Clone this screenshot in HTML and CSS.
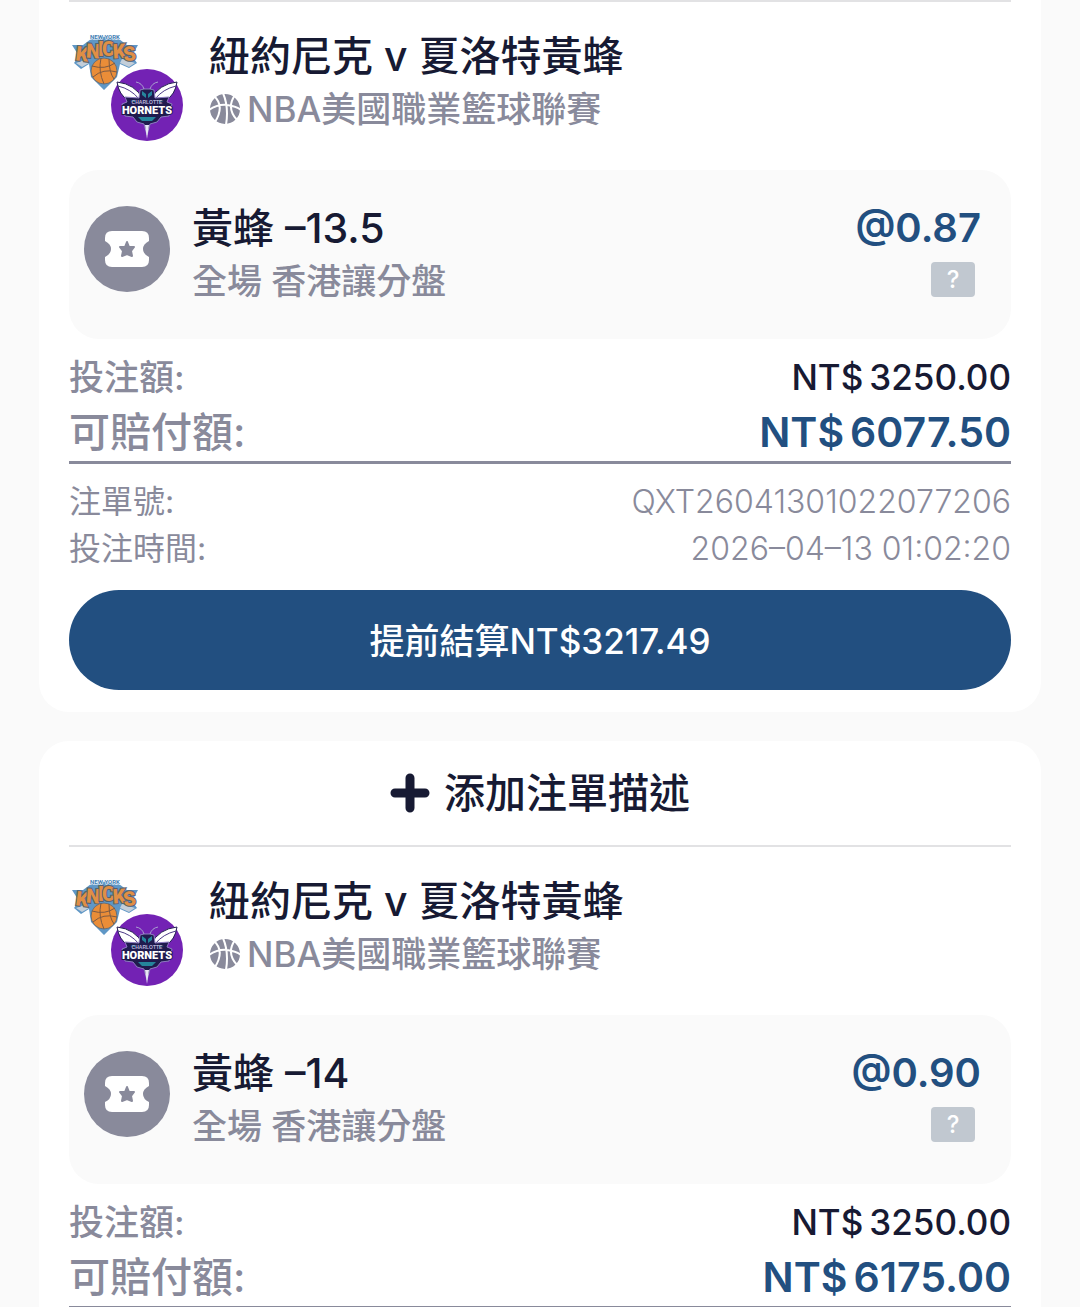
FILE: index.html
```
<!DOCTYPE html>
<html lang="zh-Hant">
<head>
  <meta charset="UTF-8" />
  <meta name="viewport" content="width=device-width, initial-scale=1.0"/>
  <title>注單</title>
  <link rel="stylesheet" href="styles.css">
</head>
<body>

  <main class="bet-list">

    <!-- Bet 1 -->
    <article class="bet-card bet-card-scrolled">
      <header class="match">
        <div class="logos">
          <svg class="logo-home" viewBox="0 0 68 58" aria-label="Knicks">
            <path d="M1 12 L12 12 L20 6 Q34 1 48 6 L56 12 L67 12 L61 23 L66 30 L58 35 L49 31 L46 44 L33 57 L20 44 L18 31 L10 36 L3 30 L8 23 Z" fill="#5f97c6"/>
            <path d="M5 30 L11 34 L18 30 L17 26 Z M64 30 L58 34 L49 30 L51 26 Z" fill="#c3ced9"/>
            <g class="knicks-word">
              <text x="5" y="28" transform="rotate(8 11 20)">K</text>
              <text x="15" y="25" transform="rotate(4 21 20)">N</text>
              <text x="27" y="23">I</text>
              <text x="31" y="23">C</text>
              <text x="42" y="25" transform="rotate(-4 48 20)">K</text>
              <text x="52" y="28" transform="rotate(-8 57 20)">S</text>
            </g>
            <text class="knicks-city" x="34" y="6">NEW YORK</text>
            <circle cx="33" cy="38" r="13" fill="#ea8d38" stroke="#64707c"/>
            <path d="M21 33 Q34 37 44 30 M30 25 Q27 38 33 51 M38 26 Q38 39 43 46 M22 44 Q32 35 46 39" fill="none" stroke="#7d5a43"/>
          </svg>
          <svg class="logo-away" viewBox="0 0 72 72" aria-label="Hornets">
            <circle cx="36" cy="36" r="36" fill="#7322b4"/>
            <path d="M6 13 Q24 15 32 30 L29 34 L17 31 Q8 26 6 13 Z M66 13 Q48 15 40 30 L43 34 L55 31 Q64 26 66 13 Z" fill="#fff" stroke="#221d52"/>
            <path d="M7 17 Q20 20 28 30 M65 17 Q52 20 44 30" fill="none" stroke="#4c3a86"/>
            <path d="M29 21 L33 20 H39 L43 21 L44 29 L58 28 L56 33 L61 35 L58 47 L50 48 L46 53 L39 55 L36 66 L33 55 L26 53 L22 48 L14 47 L11 35 L16 33 L14 28 L28 29 Z" fill="#201b4e" stroke="#8d7cc0"/>
            <path d="M31 22 L35 25 V29 L31 26 Z M41 22 L37 25 V29 L41 26 Z M27 48 H45 L41 52 H31 Z M19 32 L24 31 V33 Z M53 32 L48 31 V33 Z" fill="#25859c"/>
            <path d="M25 13 Q31 14 33 20 M47 13 Q41 14 39 20" fill="none" stroke="#a99fd0"/>
            <path d="M34 56 H38 L36 70 Z" fill="#e9e6f6"/>
            <text class="hornets-city" x="36" y="35">CHARLOTTE</text>
            <text class="hornets-word" x="36" y="45">HORNETS</text>
          </svg>
        </div>
        <div>
          <h2 class="title">紐約尼克 v 夏洛特黃蜂</h2>
          <p class="subtitle">
            <svg class="ball" viewBox="0 0 32 32">
              <circle cx="16" cy="16" r="16" fill="#898a9b"/>
              <path d="M0 17 Q9 11 18 12 Q27 13 32 17 M14 0 Q20 14 17 32 M5 3 Q16 13 6 29 M26 2 Q17 15 28 27"/>
            </svg>NBA美國職業籃球聯賽
          </p>
        </div>
      </header>

      <section class="pick">
        <span class="pick-icon">
          <svg viewBox="0 0 46 38">
            <path d="M8 1 H38 Q45 1 45 8 V11 Q39 14 39 19 Q39 24 45 27 V30 Q45 37 38 37 H8 Q1 37 1 30 V27 Q7 24 7 19 Q7 14 1 11 V8 Q1 1 8 1 Z" fill="#fff"/>
            <path d="M23 12 L25 17 L30 17 L27 21 L28 26 L23 24 L18 26 L19 21 L16 17 L21 17 Z" fill="#898a9b" stroke="#898a9b" stroke-width="2" stroke-linejoin="round"/>
          </svg>
        </span>
        <div class="pick-info">
          <h3 class="title">黃蜂 –13.5</h3>
          <p class="subtitle">全場 香港讓分盤</p>
        </div>
        <div class="pick-odds">
          <span class="odds">@0.87</span>
          <button class="help" type="button">?</button>
        </div>
      </section>

      <dl class="amounts">
        <div class="row stake"><dt>投注額:</dt><dd><span>NT$</span><span>3250.00</span></dd></div>
        <div class="row payout"><dt>可賠付額:</dt><dd><span>NT$</span><span>6077.50</span></dd></div>
      </dl>

      <dl class="details">
        <div class="row"><dt>注單號:</dt><dd>QXT26041301022077206</dd></div>
        <div class="row"><dt>投注時間:</dt><dd>2026–04–13 01:02:20</dd></div>
      </dl>

      <button class="cash-out" type="button">提前結算NT$3217.49</button>
    </article>

    <!-- Bet 2 -->
    <article class="bet-card">
      <button class="add-note" type="button">
        <svg class="plus" viewBox="0 0 40 40"><path d="M20 5 V35 M5 20 H35"/></svg>
        <span>添加注單描述</span>
      </button>

      <header class="match">
        <div class="logos">
          <svg class="logo-home" viewBox="0 0 68 58" aria-label="Knicks">
            <path d="M1 12 L12 12 L20 6 Q34 1 48 6 L56 12 L67 12 L61 23 L66 30 L58 35 L49 31 L46 44 L33 57 L20 44 L18 31 L10 36 L3 30 L8 23 Z" fill="#5f97c6"/>
            <path d="M5 30 L11 34 L18 30 L17 26 Z M64 30 L58 34 L49 30 L51 26 Z" fill="#c3ced9"/>
            <g class="knicks-word">
              <text x="5" y="28" transform="rotate(8 11 20)">K</text>
              <text x="15" y="25" transform="rotate(4 21 20)">N</text>
              <text x="27" y="23">I</text>
              <text x="31" y="23">C</text>
              <text x="42" y="25" transform="rotate(-4 48 20)">K</text>
              <text x="52" y="28" transform="rotate(-8 57 20)">S</text>
            </g>
            <text class="knicks-city" x="34" y="6">NEW YORK</text>
            <circle cx="33" cy="38" r="13" fill="#ea8d38" stroke="#64707c"/>
            <path d="M21 33 Q34 37 44 30 M30 25 Q27 38 33 51 M38 26 Q38 39 43 46 M22 44 Q32 35 46 39" fill="none" stroke="#7d5a43"/>
          </svg>
          <svg class="logo-away" viewBox="0 0 72 72" aria-label="Hornets">
            <circle cx="36" cy="36" r="36" fill="#7322b4"/>
            <path d="M6 13 Q24 15 32 30 L29 34 L17 31 Q8 26 6 13 Z M66 13 Q48 15 40 30 L43 34 L55 31 Q64 26 66 13 Z" fill="#fff" stroke="#221d52"/>
            <path d="M7 17 Q20 20 28 30 M65 17 Q52 20 44 30" fill="none" stroke="#4c3a86"/>
            <path d="M29 21 L33 20 H39 L43 21 L44 29 L58 28 L56 33 L61 35 L58 47 L50 48 L46 53 L39 55 L36 66 L33 55 L26 53 L22 48 L14 47 L11 35 L16 33 L14 28 L28 29 Z" fill="#201b4e" stroke="#8d7cc0"/>
            <path d="M31 22 L35 25 V29 L31 26 Z M41 22 L37 25 V29 L41 26 Z M27 48 H45 L41 52 H31 Z M19 32 L24 31 V33 Z M53 32 L48 31 V33 Z" fill="#25859c"/>
            <path d="M25 13 Q31 14 33 20 M47 13 Q41 14 39 20" fill="none" stroke="#a99fd0"/>
            <path d="M34 56 H38 L36 70 Z" fill="#e9e6f6"/>
            <text class="hornets-city" x="36" y="35">CHARLOTTE</text>
            <text class="hornets-word" x="36" y="45">HORNETS</text>
          </svg>
        </div>
        <div>
          <h2 class="title">紐約尼克 v 夏洛特黃蜂</h2>
          <p class="subtitle">
            <svg class="ball" viewBox="0 0 32 32">
              <circle cx="16" cy="16" r="16" fill="#898a9b"/>
              <path d="M0 17 Q9 11 18 12 Q27 13 32 17 M14 0 Q20 14 17 32 M5 3 Q16 13 6 29 M26 2 Q17 15 28 27"/>
            </svg>NBA美國職業籃球聯賽
          </p>
        </div>
      </header>

      <section class="pick">
        <span class="pick-icon">
          <svg viewBox="0 0 46 38">
            <path d="M8 1 H38 Q45 1 45 8 V11 Q39 14 39 19 Q39 24 45 27 V30 Q45 37 38 37 H8 Q1 37 1 30 V27 Q7 24 7 19 Q7 14 1 11 V8 Q1 1 8 1 Z" fill="#fff"/>
            <path d="M23 12 L25 17 L30 17 L27 21 L28 26 L23 24 L18 26 L19 21 L16 17 L21 17 Z" fill="#898a9b" stroke="#898a9b" stroke-width="2" stroke-linejoin="round"/>
          </svg>
        </span>
        <div class="pick-info">
          <h3 class="title">黃蜂 –14</h3>
          <p class="subtitle">全場 香港讓分盤</p>
        </div>
        <div class="pick-odds">
          <span class="odds">@0.90</span>
          <button class="help" type="button">?</button>
        </div>
      </section>

      <dl class="amounts">
        <div class="row stake"><dt>投注額:</dt><dd><span>NT$</span><span>3250.00</span></dd></div>
        <div class="row payout"><dt>可賠付額:</dt><dd><span>NT$</span><span>6175.00</span></dd></div>
      </dl>
    </article>

  </main>

</body>
</html>
```
FILE: styles.css
```
* {
  margin: 0;
  padding: 0;
  box-sizing: border-box;
}

body {
  background: #fafafa;
  color: #171a33;
  font-family: Inter, 'Noto Sans CJK TC', sans-serif;
}

button {
  font-family: inherit;
  border: none;
  cursor: pointer;
}

.bet-list {
  display: flex;
  flex-direction: column;
  gap: 29px;
  padding: 0 39px;
}

.bet-card {
  background: #fff;
  border-radius: 30px;
  padding: 0 30px 22px;
}

/* Card whose top is scrolled out of view */
.bet-card-scrolled {
  border-radius: 0 0 30px 30px;
}

.bet-card:last-child {
  border-radius: 30px 30px 0 0;
  padding-bottom: 0;
}

.add-note {
  display: flex;
  justify-content: center;
  align-items: center;
  gap: 14px;
  width: 100%;
  height: 104px;
  background: none;
  color: #171a33;
  font-size: 41px;
  font-weight: 500;
}

.add-note span {
  padding-bottom: 6px;
}

.plus {
  width: 40px;
  height: 40px;
  fill: none;
  stroke: #171a33;
  stroke-width: 9;
  stroke-linecap: round;
}

/* Teams */
.match {
  display: flex;
  gap: 25px;
  padding: 28px 0;
  border-top: 2px solid #e2e2e4;
}

.logos {
  position: relative;
  width: 115px;
  height: 112px;
}

.logo-home {
  position: absolute;
  top: 3px;
  left: 2px;
  width: 68px;
  height: 58px;
}

.logo-away {
  position: absolute;
  right: 1px;
  bottom: 1px;
  width: 72px;
  height: 72px;
}

.knicks-word {
  font: 900 20px Roboto, sans-serif;
  fill: #e08f45;
  stroke: #56616e;
  stroke-width: 2px;
  paint-order: stroke;
}

.knicks-city {
  font: bold 6px Roboto, sans-serif;
  fill: #3f7db3;
  stroke: #fff;
  stroke-width: 1px;
  paint-order: stroke;
  text-anchor: middle;
}

.hornets-city {
  font: bold 5px 'Liberation Sans', sans-serif;
  fill: #b9b4dc;
  text-anchor: middle;
}

.hornets-word {
  font: 900 11px Roboto, sans-serif;
  fill: #fff;
  stroke: #201b4e;
  stroke-width: 2px;
  paint-order: stroke;
  text-anchor: middle;
}

.title {
  font-size: 41px;
  font-weight: 500;
  line-height: 52px;
}

.subtitle {
  display: flex;
  align-items: center;
  color: #898a9b;
  font-size: 35px;
  font-weight: 500;
  line-height: 54px;
}

.ball {
  width: 32px;
  height: 32px;
  margin-right: 6px;
  fill: none;
  stroke: #fff;
  stroke-width: 2;
}

/* Selection */
.pick {
  display: flex;
  align-items: flex-start;
  gap: 22px;
  padding: 32px 30px 31px 15px;
  background: #fafafa;
  border-radius: 30px;
}

.pick-icon {
  display: flex;
  justify-content: center;
  align-items: center;
  width: 86px;
  height: 86px;
  margin-top: 4px;
  border-radius: 50%;
  background: #898a9b;
}

.pick-icon svg {
  width: 46px;
  height: 38px;
}

.pick-info {
  flex: 1;
}

.pick-odds {
  display: flex;
  flex-direction: column;
  align-items: flex-end;
  gap: 8px;
}

.odds {
  color: #224f80;
  font-size: 40px;
  font-weight: 600;
  line-height: 52px;
}

.help {
  width: 44px;
  height: 35px;
  margin-right: 6px;
  border-radius: 4px;
  background: #c1c8d0;
  color: #fff;
  font-size: 24px;
  font-weight: 500;
}

/* Amounts */
.row {
  display: flex;
  justify-content: space-between;
}

.amounts {
  padding-top: 11px;
  border-bottom: 3px solid #898a9b;
}

.amounts dt {
  color: #898a9b;
  font-weight: 500;
}

.amounts dd {
  display: flex;
  gap: 6px;
  font-weight: 500;
}

.stake {
  font-size: 35px;
  line-height: 54px;
}

.payout {
  font-size: 41px;
  line-height: 57px;
}

.payout dd {
  color: #224f80;
  font-weight: 600;
}

.details {
  padding: 14px 0 18px;
  color: #898a9b;
  font-size: 32px;
  line-height: 47px;
}

.details dd {
  font-weight: 300;
}

.cash-out {
  display: block;
  width: 100%;
  height: 100px;
  padding-bottom: 4px;
  border-radius: 50px;
  background: #224f80;
  color: #fff;
  font-size: 35px;
  font-weight: 500;
}
```
